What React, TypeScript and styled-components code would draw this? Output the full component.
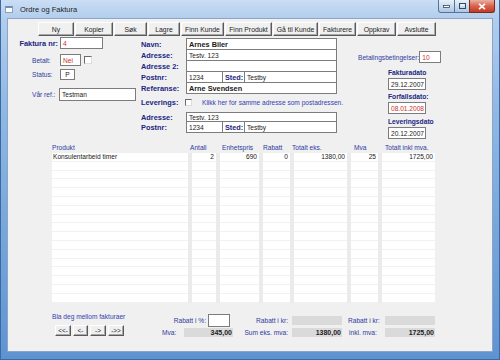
import React from 'react';
import styled, { createGlobalStyle } from 'styled-components';

const FONT = "'Liberation Sans', Arial, sans-serif";
const NAVY = '#1b2682';
const BLUE = '#2f3b9f';
const RED = '#c8302a';

const GlobalStyle = createGlobalStyle`
  html, body {
    margin: 0;
    padding: 0;
  }
  body {
    width: 500px;
    height: 360px;
    overflow: hidden;
    font-family: ${FONT};
  }
`;

const Window = styled.div`
  width: 500px;
  height: 360px;
  box-sizing: border-box;
  display: flex;
  flex-direction: column;
  padding: 0 6px 7px 6px;
  border: 1px solid #3b6aa3;
  border-top: none;
  background: linear-gradient(180deg, #cadef4 0px, #b2cdee 18px, #8fb8e4 110px, #5e93d2 100%);
`;

const TitleBar = styled.div`
  height: 18px;
  display: flex;
  align-items: center;
`;

const WinIcon = styled.div`
  width: 8px;
  height: 7px;
  margin-left: -2px;
  box-sizing: border-box;
  background: #fdfdfd;
  border: 1px solid #8f9fb4;
  border-top: 2px solid #6f8fb8;
`;

const Title = styled.span`
  margin-left: 7px;
  font-size: 7.5px;
  color: #1d1d1d;
`;

const Controls = styled.div`
  display: flex;
  align-self: flex-start;
  margin-left: auto;
  margin-right: -2px;
`;

const CtrlButton = styled.div<{ $w: number; $close?: boolean }>`
  width: ${(p) => p.$w}px;
  height: 13px;
  box-sizing: border-box;
  display: flex;
  align-items: center;
  justify-content: center;
  border: 1px solid ${(p) => (p.$close ? '#7d2a1e' : '#56739a')};
  border-top: none;
  margin-left: -1px;
  background: ${(p) =>
    p.$close
      ? 'linear-gradient(180deg, #eab0a4 0%, #d8634e 50%, #c33a22 100%)'
      : 'linear-gradient(180deg, #e8f0fa 0%, #cbdcf0 50%, #afc6e3 100%)'};
  border-radius: ${(p) => (p.$close ? '0 0 3px 0' : '0')};
  &:first-child {
    border-radius: 0 0 0 3px;
  }
`;

const Client = styled.div`
  flex: 1;
  display: flex;
  flex-direction: column;
  background: #f0f0f0;
  border: 1px solid #8ba5c6;
  font-size: 6.6px;
  color: #1a1a1a;
`;

const Toolbar = styled.div`
  display: flex;
  gap: 1px;
  height: 14px;
  margin-top: 3px;
  padding-left: 30px;
`;

const ToolButton = styled.div<{ $w: number }>`
  width: ${(p) => p.$w}px;
  height: 14px;
  flex-shrink: 0;
  box-sizing: border-box;
  display: flex;
  align-items: center;
  justify-content: center;
  background: #f0f0f0;
  border: 1px solid;
  border-color: #ffffff #5a5a5a #5a5a5a #ffffff;
  box-shadow: inset -1px -1px 0 #a8a8a8;
  font-size: 6.8px;
  color: #222;
  white-space: nowrap;
`;

const Form = styled.div`
  display: flex;
  height: 104px;
  margin-top: 1px;
  padding-left: 10px;
`;

const Column = styled.div<{ $w: number; $ml?: number }>`
  width: ${(p) => p.$w}px;
  margin-left: ${(p) => p.$ml ?? 0}px;
  display: flex;
  flex-direction: column;
`;

const Row = styled.div<{ $top: number; $h: number; $between?: boolean }>`
  display: flex;
  align-items: stretch;
  height: ${(p) => p.$h}px;
  margin-top: ${(p) => p.$top}px;
  justify-content: ${(p) => (p.$between ? 'space-between' : 'flex-start')};
`;

const Label = styled.div<{ $w?: number; $bold?: boolean; $right?: boolean; $pl?: number; $pr?: number }>`
  width: ${(p) => (p.$w ? `${p.$w}px` : 'auto')};
  flex-shrink: 0;
  box-sizing: border-box;
  display: flex;
  align-items: center;
  justify-content: ${(p) => (p.$right ? 'flex-end' : 'flex-start')};
  padding-left: ${(p) => p.$pl ?? 0}px;
  padding-right: ${(p) => p.$pr ?? 0}px;
  font-size: ${(p) => (p.$bold ? '7.4px' : '6.6px')};
  font-weight: ${(p) => (p.$bold ? 700 : 400)};
  color: ${(p) => (p.$bold ? NAVY : BLUE)};
  white-space: nowrap;
`;

const Field = styled.div<{ $w?: number; $color?: string; $bold?: boolean; $center?: boolean; $ml?: number }>`
  width: ${(p) => (p.$w ? `${p.$w}px` : 'auto')};
  flex: ${(p) => (p.$w ? '0 0 auto' : '1')};
  margin-left: ${(p) => p.$ml ?? 0}px;
  box-sizing: border-box;
  display: flex;
  align-items: center;
  justify-content: ${(p) => (p.$center ? 'center' : 'flex-start')};
  padding: 0 2px;
  background: #fff;
  border: 1px solid #7c7c7c;
  font-size: ${(p) => (p.$bold ? '7.3px' : '6.6px')};
  font-weight: ${(p) => (p.$bold ? 700 : 400)};
  color: ${(p) => p.$color ?? '#1a1a1a'};
  white-space: nowrap;
  overflow: hidden;
`;

const StackRow = styled(Row)`
  & + & {
    margin-top: -1px;
  }
`;

const Check = styled.div<{ $size: number; $ml: number }>`
  width: ${(p) => p.$size}px;
  height: ${(p) => p.$size}px;
  flex-shrink: 0;
  margin-left: ${(p) => p.$ml}px;
  align-self: center;
  box-sizing: border-box;
  background: #fff;
  border: 1px solid;
  border-color: #6c6c6c #dcdcdc #dcdcdc #6c6c6c;
`;

const Hint = styled.span`
  margin-left: 10px;
  align-self: center;
  color: #3640b0;
  white-space: nowrap;
`;

const DateLabel = styled.div<{ $top: number }>`
  height: 10px;
  margin-top: ${(p) => p.$top}px;
  padding-left: 30px;
  display: flex;
  align-items: center;
  font-size: 6.7px;
  font-weight: 700;
  color: ${NAVY};
  white-space: nowrap;
`;

const DateField = styled(Field)`
  height: 12px;
  margin-top: 1px;
  margin-left: 30px;
`;

const TableWrap = styled.div`
  margin-left: 44px;
  width: 383px;
`;

const TableHead = styled.div<{ $cols: string }>`
  display: grid;
  grid-template-columns: ${(p) => p.$cols};
  column-gap: 4px;
  height: 11px;
  align-items: end;
  color: ${BLUE};
  white-space: nowrap;
`;

const HeadCell = styled.div<{ $shift: number }>`
  margin-left: ${(p) => p.$shift}px;
  line-height: 9px;
`;

const TableBody = styled.div<{ $cols: string }>`
  display: grid;
  grid-template-columns: ${(p) => p.$cols};
  grid-auto-rows: 8.8px;
  column-gap: 4px;
  margin-top: 1px;
  background: #ebebeb;
`;

const Cell = styled.div<{ $right?: boolean }>`
  background: #fff;
  border-bottom: 1px solid #f1f1f1;
  box-sizing: border-box;
  padding: 0 2px 0 1px;
  line-height: 8px;
  text-align: ${(p) => (p.$right ? 'right' : 'left')};
  white-space: nowrap;
  overflow: hidden;
`;

const Bottom = styled.div`
  display: flex;
  margin-top: 9px;
  padding-left: 44px;
`;

const NavBlock = styled.div`
  width: 110px;
  display: flex;
  flex-direction: column;
`;

const NavTitle = styled.div`
  height: 9px;
  line-height: 9px;
  color: #3640b0;
  white-space: nowrap;
`;

const NavButtons = styled.div`
  display: flex;
  gap: 2px;
  margin-top: 4px;
  padding-left: 3px;
`;

const NavButton = styled(ToolButton)`
  height: 11px;
  font-size: 6.4px;
`;

const Summary = styled.div`
  display: flex;
  flex-direction: column;
`;

const GrayBox = styled.div<{ $w: number }>`
  width: ${(p) => p.$w}px;
  height: 9px;
  flex-shrink: 0;
  align-self: center;
  box-sizing: border-box;
  padding-right: 1px;
  background: #dadada;
  text-align: right;
  line-height: 9px;
  font-size: 7px;
  font-weight: 700;
  color: #202020;
`;

const TOOLS: [string, number][] = [
  ['Ny', 36],
  ['Kopier', 38],
  ['Søk', 33],
  ['Lagre', 32],
  ['Finn Kunde', 43],
  ['Finn Produkt', 47],
  ['Gå til Kunde', 45],
  ['Fakturere', 37],
  ['Oppkrav', 39],
  ['Avslutte', 39],
];

const COLUMNS = [
  { title: 'Produkt', w: 136, right: false, shift: 0 },
  { title: 'Antall', w: 24, right: true, shift: -2 },
  { title: 'Enhetspris', w: 39, right: true, shift: 2 },
  { title: 'Rabatt', w: 27, right: true, shift: 0 },
  { title: 'Totalt eks.', w: 53, right: true, shift: -2 },
  { title: 'Mva', w: 27, right: true, shift: 3 },
  { title: 'Totalt inkl mva.', w: 53, right: true, shift: 3 },
];

const LINES: string[][] = [['Konsulentarbeid timer', '2', '690', '0', '1380,00', '25', '1725,00']];
const ROW_COUNT = 17;

const App: React.FC = () => {
  const cols = COLUMNS.map((c) => `${c.w}px`).join(' ');
  const rows = Array.from({ length: ROW_COUNT }, (_, i) => LINES[i] ?? COLUMNS.map(() => ''));

  return (
    <>
      <GlobalStyle />
      <Window>
        <TitleBar>
          <WinIcon />
          <Title>Ordre og Faktura</Title>
          <Controls>
            <CtrlButton $w={17}>
              <svg width="7" height="3" viewBox="0 0 7 3">
                <rect x="0.5" y="0.5" width="6" height="2" fill="#fff" stroke="#34495e" strokeWidth="0.8" />
              </svg>
            </CtrlButton>
            <CtrlButton $w={16}>
              <svg width="7" height="6" viewBox="0 0 7 6">
                <rect x="0.5" y="0.5" width="6" height="5" fill="none" stroke="#34495e" strokeWidth="1" />
                <rect x="1.5" y="1.5" width="4" height="1" fill="#fff" />
              </svg>
            </CtrlButton>
            <CtrlButton $w={26} $close>
              <svg width="8" height="7" viewBox="0 0 8 7">
                <path d="M1 0.8 L7 6.2 M7 0.8 L1 6.2" stroke="#fff" strokeWidth="1.6" />
              </svg>
            </CtrlButton>
          </Controls>
        </TitleBar>

        <Client>
          <Toolbar>
            {TOOLS.map(([name, w]) => (
              <ToolButton key={name} $w={w}>
                {name}
              </ToolButton>
            ))}
          </Toolbar>

          <Form>
            <Column $w={123}>
              <Row $top={0} $h={12}>
                <Label $w={42} $bold $right $pr={2}>
                  Faktura nr:
                </Label>
                <Field $w={43} $color={RED}>
                  4
                </Field>
              </Row>
              <Row $top={5} $h={12}>
                <Label $w={42} $pl={14}>
                  Betalt:
                </Label>
                <Field $w={21} $color={RED}>
                  Nei
                </Field>
                <Check $size={8} $ml={3} />
              </Row>
              <Row $top={3} $h={11}>
                <Label $w={42} $pl={14}>
                  Status:
                </Label>
                <Field $w={15} $center>
                  P
                </Field>
              </Row>
              <Row $top={8} $h={13}>
                <Label $w={41} $pl={14}>
                  Vår ref.:
                </Label>
                <Field $w={77}>Testman</Field>
              </Row>
            </Column>

            <Column $w={196}>
              <div style={{ marginTop: 1 }}>
                <StackRow $top={0} $h={12}>
                  <Label $w={45} $bold>
                    Navn:
                  </Label>
                  <Field $bold>Arnes Biler</Field>
                </StackRow>
                <StackRow $top={0} $h={12}>
                  <Label $w={45} $bold>
                    Adresse:
                  </Label>
                  <Field>Testv. 123</Field>
                </StackRow>
                <StackRow $top={0} $h={12}>
                  <Label $w={45} $bold>
                    Adresse 2:
                  </Label>
                  <Field />
                </StackRow>
                <StackRow $top={0} $h={12}>
                  <Label $w={45} $bold>
                    Postnr:
                  </Label>
                  <Field $w={37}>1234</Field>
                  <Field $w={23} $ml={-1} $bold $color={NAVY}>
                    Sted:
                  </Field>
                  <Field $ml={-1}>Testby</Field>
                </StackRow>
                <StackRow $top={0} $h={12}>
                  <Label $w={45} $bold>
                    Referanse:
                  </Label>
                  <Field $bold>Arne Svendsen</Field>
                </StackRow>
              </div>

              <Row $top={3} $h={10}>
                <Label $w={45} $bold>
                  Leverings:
                </Label>
                <Check $size={7} $ml={-1} />
                <Hint>Klikk her for samme adresse som postadressen.</Hint>
              </Row>

              <div style={{ marginTop: 5 }}>
                <StackRow $top={0} $h={10}>
                  <Label $w={45} $bold>
                    Adresse:
                  </Label>
                  <Field>Testv. 123</Field>
                </StackRow>
                <StackRow $top={0} $h={12}>
                  <Label $w={45} $bold>
                    Postnr:
                  </Label>
                  <Field $w={37}>1234</Field>
                  <Field $w={23} $ml={-1} $bold $color={NAVY}>
                    Sted:
                  </Field>
                  <Field $ml={-1}>Testby</Field>
                </StackRow>
              </div>
            </Column>

            <Column $w={77} $ml={21}>
              <Row $top={14} $h={12} $between>
                <Label>Betalingsbetingelser:</Label>
                <Field $w={22} $color={RED}>
                  10
                </Field>
              </Row>
              <DateLabel $top={4}>Fakturadato</DateLabel>
              <DateField $w={38}>29.12.2007</DateField>
              <DateLabel $top={1}>Forfallsdato:</DateLabel>
              <DateField $w={38} $color={RED}>
                08.01.2008
              </DateField>
              <DateLabel $top={2}>Leveringsdato</DateLabel>
              <DateField $w={38}>20.12.2007</DateField>
            </Column>
          </Form>

          <TableWrap>
            <TableHead $cols={cols}>
              {COLUMNS.map((c) => (
                <HeadCell key={c.title} $shift={c.shift}>
                  {c.title}
                </HeadCell>
              ))}
            </TableHead>
            <TableBody $cols={cols}>
              {rows.map((line, r) =>
                line.map((value, c) => (
                  <Cell key={`${r}-${c}`} $right={COLUMNS[c].right}>
                    {value}
                  </Cell>
                ))
              )}
            </TableBody>
          </TableWrap>

          <Bottom>
            <NavBlock>
              <NavTitle>Bla deg mellom fakturaer</NavTitle>
              <NavButtons>
                <NavButton $w={16}>&lt;&lt;-</NavButton>
                <NavButton $w={15}>&lt;-</NavButton>
                <NavButton $w={16}>-&gt;</NavButton>
                <NavButton $w={16}>-&gt;&gt;</NavButton>
              </NavButtons>
            </NavBlock>

            <Summary>
              <Row $top={2} $h={13}>
                <Label $w={46} $right $pr={2}>
                  Rabatt i %:
                </Label>
                <Field $w={22} />
                <Label $w={62} $right $pr={4}>
                  Rabatt i kr:
                </Label>
                <GrayBox $w={50} />
                <Label $w={43} $pl={6}>
                  Rabatt i kr:
                </Label>
                <GrayBox $w={50} />
              </Row>
              <Row $top={1} $h={10}>
                <Label $w={22}>Mva:</Label>
                <GrayBox $w={49}>345,00</GrayBox>
                <Label $w={59} $right $pr={4}>
                  Sum eks. mva:
                </Label>
                <GrayBox $w={50}>1380,00</GrayBox>
                <Label $w={43} $pl={7}>
                  inkl. mva:
                </Label>
                <GrayBox $w={50}>1725,00</GrayBox>
              </Row>
            </Summary>
          </Bottom>
        </Client>
      </Window>
    </>
  );
};

export default App;
